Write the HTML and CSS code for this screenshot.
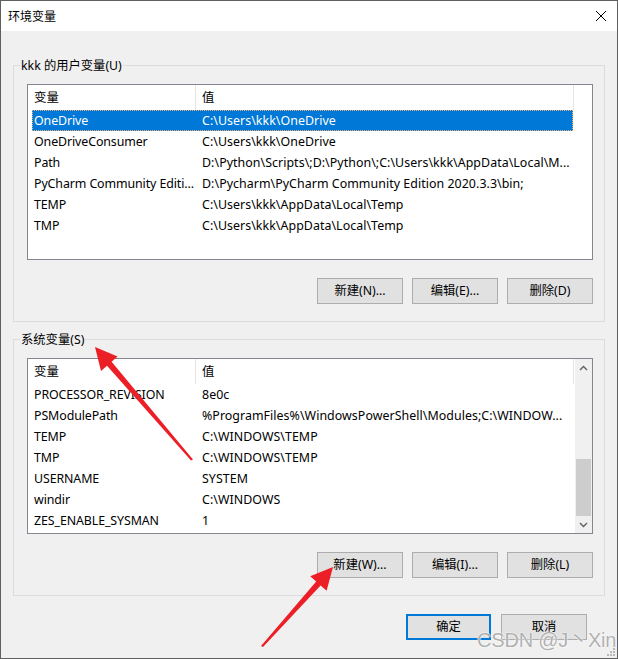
FILE: index.html
```html
<!DOCTYPE html>
<html lang="zh">
<head>
<meta charset="utf-8">
<title>环境变量</title>
<link rel="stylesheet" href="styles.css">
</head>
<body>
<div class="window">
  <div class="titlebar">
    <span class="title">环境变量</span>
    <svg class="close" width="12" height="12" viewBox="0 0 12 12"><path d="M1 1L11 11M11 1L1 11" stroke="#000" stroke-width="1"/></svg>
  </div>
  <div class="content">
    <fieldset class="group">
      <legend>kkk 的用户变量(U)</legend>
      <div class="listbox">
        <div class="list-main">
          <div class="lv-header"><div class="hc hc1">变量</div><div class="hc hc2">值</div></div>
          <div class="row selected"><div class="c1">OneDrive</div><div class="c2">C:\Users\kkk\OneDrive</div></div>
          <div class="row"><div class="c1">OneDriveConsumer</div><div class="c2">C:\Users\kkk\OneDrive</div></div>
          <div class="row"><div class="c1">Path</div><div class="c2">D:\Python\Scripts\;D:\Python\;C:\Users\kkk\AppData\Local\M...</div></div>
          <div class="row"><div class="c1">PyCharm Community Editi...</div><div class="c2">D:\Pycharm\PyCharm Community Edition 2020.3.3\bin;</div></div>
          <div class="row"><div class="c1">TEMP</div><div class="c2">C:\Users\kkk\AppData\Local\Temp</div></div>
          <div class="row"><div class="c1">TMP</div><div class="c2">C:\Users\kkk\AppData\Local\Temp</div></div>
        </div>
      </div>
      <div class="btnrow">
        <button class="btn">新建(N)...</button>
        <button class="btn">编辑(E)...</button>
        <button class="btn">删除(D)</button>
      </div>
    </fieldset>

    <fieldset class="group group-sys">
      <legend>系统变量(S)</legend>
      <div class="listbox">
        <div class="list-main">
          <div class="lv-header"><div class="hc hc1">变量</div><div class="hc hc2">值</div></div>
          <div class="row"><div class="c1">PROCESSOR_REVISION</div><div class="c2">8e0c</div></div>
          <div class="row"><div class="c1">PSModulePath</div><div class="c2">%ProgramFiles%\WindowsPowerShell\Modules;C:\WINDOW...</div></div>
          <div class="row"><div class="c1">TEMP</div><div class="c2">C:\WINDOWS\TEMP</div></div>
          <div class="row"><div class="c1">TMP</div><div class="c2">C:\WINDOWS\TEMP</div></div>
          <div class="row"><div class="c1">USERNAME</div><div class="c2">SYSTEM</div></div>
          <div class="row"><div class="c1">windir</div><div class="c2">C:\WINDOWS</div></div>
          <div class="row"><div class="c1">ZES_ENABLE_SYSMAN</div><div class="c2">1</div></div>
        </div>
        <div class="scrollbar">
          <div class="sb-arrow"><svg width="9" height="6" viewBox="0 0 9 6"><path d="M1 5L4.5 1.5L8 5" fill="none" stroke="#606060" stroke-width="1.4"/></svg></div>
          <div class="sb-track"><div class="sb-thumb"></div></div>
          <div class="sb-arrow"><svg width="9" height="6" viewBox="0 0 9 6"><path d="M1 1L4.5 4.5L8 1" fill="none" stroke="#606060" stroke-width="1.4"/></svg></div>
        </div>
      </div>
      <div class="btnrow">
        <button class="btn">新建(W)...</button>
        <button class="btn">编辑(I)...</button>
        <button class="btn">删除(L)</button>
      </div>
    </fieldset>

    <div class="dialog-btns">
      <button class="btn btn-default">确定</button>
      <button class="btn">取消</button>
    </div>
  </div>

  <svg class="annotations" width="618" height="659" viewBox="0 0 618 659">
    <polygon fill="#ec1f27" points="95,347 117.6,356.5 111.6,361.7 193,459.5 191,460.5 107,365.7 101,370.9"/>
    <polygon fill="#ec1f27" points="333,567 326.6,590.8 320.6,585.5 263,647 261,646 316.2,581.5 310.2,576.2"/>
  </svg>
  <div class="watermark">CSDN @J丶Xin</div>
  <svg class="grip" width="10" height="10" viewBox="0 0 10 10">
    <g fill="#b8b8b8"><rect x="7" y="1" width="2" height="2"/><rect x="4" y="4" width="2" height="2"/><rect x="7" y="4" width="2" height="2"/><rect x="1" y="7" width="2" height="2"/><rect x="4" y="7" width="2" height="2"/><rect x="7" y="7" width="2" height="2"/></g>
  </svg>
</div>
</body>
</html>
```

FILE: styles.css
```css
* { box-sizing: border-box; }
html, body { margin: 0; padding: 0; background: #f0f0f0; }
body {
  font-family: "Noto Sans", "Noto Sans CJK SC", sans-serif;
  font-size: 12px;
  color: #000;
}
.window {
  position: relative;
  width: 618px;
  height: 659px;
  border: 1px solid #5f5f5f;
  background: #f0f0f0;
  overflow: hidden;
}
.titlebar {
  height: 30px;
  background: #fff;
  display: flex;
  align-items: center;
  justify-content: space-between;
  padding: 0 10px 0 7px;
}
.title { font-family: "Noto Sans CJK SC", sans-serif; font-size: 12px; line-height: 16px; }
.close { display: block; }
.content { padding-top: 26px; }
.group {
  margin: 0 12px;
  padding: 0 11px 17px 13px;
  border: 1px solid #dcdcdc;
  min-width: 0;
}
.group-sys { margin-top: 9px; }
.group legend {
  margin-left: -7px;
  padding: 2px 1px 0;
  line-height: 14px;
  height: 16px;
  font-size: 12.3px;
}
.listbox {
  margin-top: 11px;
  width: 566px;
  height: 176px;
  border: 1px solid #828790;
  background: #fff;
  display: flex;
}
.list-main { width: 547px; font-size: 12.4px; }
.lv-header { display: flex; height: 25px; }
.hc { line-height: 25px; padding-left: 6px; border-right: 1px solid #e5e5e5; height: 25px; }
.hc1 { width: 168px; }
.hc2 { width: 378px; }
.row {
  display: flex;
  height: 21px;
  line-height: 21px;
  margin-left: 4px;
  width: 541px;
  white-space: nowrap;
  overflow: hidden;
}
.row .c1 { width: 163px; padding-left: 2px; overflow: hidden; letter-spacing: -0.1px; }
.row .c2 { flex: 1; padding-left: 7px; overflow: hidden; letter-spacing: 0.05px; }
.row.selected {
  background: #0078d7;
  color: #fff;
  outline: 1px dotted #f0b47a;
  outline-offset: -1px;
}
.scrollbar {
  width: 17px;
  display: flex;
  flex-direction: column;
  background: #f0f0f0;
}
.sb-arrow { height: 17px; display: flex; align-items: center; justify-content: center; }
.sb-track { flex: 1; display: flex; flex-direction: column; justify-content: flex-end; }
.sb-thumb { height: 57px; margin: 0 1px; background: #cdcdcd; }
.btnrow {
  display: flex;
  justify-content: flex-end;
  gap: 9px;
  margin-top: 18px;
  width: 566px;
}
.btn {
  font-family: "Noto Sans", "Noto Sans CJK SC", sans-serif;
  font-size: 12.3px;
  width: 86px;
  height: 26px;
  padding: 0;
  background: #e1e1e1;
  border: 1px solid #adadad;
  color: #000;
  line-height: 22px;
}
.btn-default { border: 2px solid #0078d7; width: 85px; }
.dialog-btns {
  display: flex;
  justify-content: flex-end;
  gap: 10px;
  margin-top: 18px;
  padding-right: 30px;
}
.annotations { position: absolute; left: -1px; top: -1px; pointer-events: none; }
.watermark {
  position: absolute;
  left: 476px;
  top: 623px;
  font-family: "Liberation Sans", "Noto Sans CJK SC", sans-serif;
  font-size: 20px;
  color: rgba(150, 150, 150, 0.75);
  text-shadow: 0 0 2px #fff, 0 0 1px #fff;
  letter-spacing: -0.2px;
}
.grip { position: absolute; right: 1px; bottom: 1px; }
```
